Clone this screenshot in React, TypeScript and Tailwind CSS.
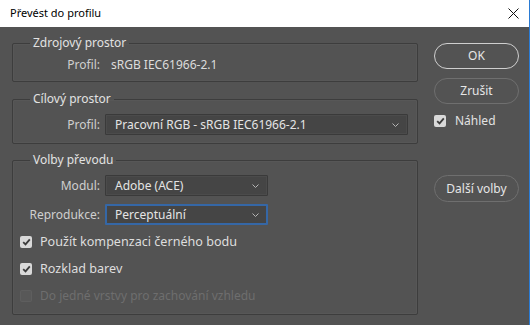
import type { ReactNode } from 'react'

const font = { fontFamily: '"Noto Sans", "Open Sans", Arial, sans-serif' }

function Chevron() {
  return (
    <svg width="7" height="4" viewBox="0 0 7 4" className="shrink-0">
      <path d="M0.5 0.5 L3.5 3.5 L6.5 0.5" fill="none" stroke="#b5b5b5" strokeWidth="1" />
    </svg>
  )
}

function Select({ value, width, focused = false }: { value: string; width: string; focused?: boolean }) {
  return (
    <div
      className={`flex h-[21px] ${width} items-center justify-between rounded-[1px] bg-[#454545] ${
        focused
          ? 'border-2 border-[#3567a6] pl-[8px] pr-[7px]'
          : 'border border-[#3a3a3a] pl-[9px] pr-[8px] shadow-[inset_0_0_0_1px_#4b4b4b]'
      }`}
    >
      <span className="text-[12px] leading-none text-[#e4e4e4]">{value}</span>
      <Chevron />
    </div>
  )
}

function CheckBox({ disabled = false, checked = true }: { disabled?: boolean; checked?: boolean }) {
  return (
    <span
      className={`flex h-[12px] w-[12px] shrink-0 items-center justify-center rounded-[2px] ${
        disabled ? 'bg-[#585858] shadow-[inset_0_0_0_1px_#5e5e5e]' : 'bg-[#d9d9d9]'
      }`}
    >
      {checked && !disabled ? (
        <svg width="9" height="8" viewBox="0 0 9 8">
          <path d="M1.2 4.2 L3.5 6.4 L7.8 1.4" fill="none" stroke="#3c3c3c" strokeWidth="1.8" />
        </svg>
      ) : null}
    </span>
  )
}

function Check({ checked = true, disabled = false, label }: { checked?: boolean; disabled?: boolean; label: string }) {
  return (
    <div className="flex h-[16px] items-center gap-[8px]">
      <CheckBox checked={checked} disabled={disabled} />
      <span className={`leading-none ${disabled ? 'text-[12px] text-[#6e6e6e]' : 'text-[12.6px] text-[#dedede]'}`}>{label}</span>
    </div>
  )
}

function Group({ title, children, className = '' }: { title: string; children: ReactNode; className?: string }) {
  return (
    <fieldset className={`m-0 min-w-0 rounded-[2px] border border-[#3d3d3d] p-0 shadow-[inset_0_0_0_1px_#575757] ${className}`}>
      <legend className="ml-[17px] px-[3px] text-[12px] leading-[14px] text-[#e2e2e2]">{title}</legend>
      {children}
    </fieldset>
  )
}

function Label({ text }: { text: string }) {
  return <span className="w-[87px] text-right text-[12px] leading-none text-[#cfcfcf]">{text}</span>
}

function Button({ label, primary = false, className = '' }: { label: string; primary?: boolean; className?: string }) {
  return (
    <div
      className={`flex h-[26px] w-[85px] items-center justify-center rounded-full border-[1.5px] text-[12px] text-[#e6e6e6] ${
        primary ? 'border-[#cfcfcf]' : 'border-[#6f6f6f]'
      } ${className}`}
    >
      {label}
    </div>
  )
}

export default function App() {
  return (
    <div className="flex h-[325px] w-[530px] flex-col overflow-hidden border-r border-[#2a7bd4] bg-[#535353]" style={font}>
      <div className="flex h-[27px] shrink-0 items-center justify-between bg-white pl-[10px] pr-[10px]">
        <span className="text-[11px] text-black">Převést do profilu</span>
        <svg width="11" height="11" viewBox="0 0 11 11">
          <path d="M0.5 0.5 L10.5 10.5 M10.5 0.5 L0.5 10.5" stroke="#111" strokeWidth="1" />
        </svg>
      </div>

      <div className="flex gap-[16px] pl-[12px] pt-[9px]">
        <div className="flex w-[406px] flex-col">
          <Group title="Zdrojový prostor">
            <div className="mb-[8px] mt-[7px] flex h-[16px] items-center">
              <Label text="Profil:" />
              <span className="ml-[11px] text-[12px] leading-none text-[#dcdcdc]">sRGB IEC61966-2.1</span>
            </div>
          </Group>

          <Group title="Cílový prostor" className="mt-[10px]">
            <div className="mb-[8px] mt-[8px] flex items-center">
              <Label text="Profil:" />
              <div className="ml-[5px]">
                <Select value="Pracovní RGB - sRGB IEC61966-2.1" width="w-[303px]" />
              </div>
            </div>
          </Group>

          <Group title="Volby převodu" className="mt-[9px]">
            <div className="mb-[10px] mt-[8px] flex flex-col">
              <div className="flex items-center">
                <Label text="Modul:" />
                <div className="ml-[5px]">
                  <Select value="Adobe (ACE)" width="w-[163px]" />
                </div>
              </div>
              <div className="mt-[8px] flex items-center">
                <Label text="Reprodukce:" />
                <div className="ml-[5px]">
                  <Select value="Perceptuální" width="w-[163px]" focused />
                </div>
              </div>
              <div className="ml-[7px] mt-[9px] flex flex-col gap-[11px]">
                <Check label="Použít kompenzaci černého bodu" />
                <Check label="Rozklad barev" />
                <Check label="Do jedné vrstvy pro zachování vzhledu" checked={false} disabled />
              </div>
            </div>
          </Group>
        </div>

        <div className="flex w-[85px] flex-col pt-[7px]">
          <Button label="OK" primary />
          <Button label="Zrušit" className="mt-[9px]" />
          <div className="mt-[9px] flex h-[16px] items-center gap-[9px]">
            <CheckBox />
            <span className="text-[12px] leading-none text-[#e2e2e2]">Náhled</span>
          </div>
          <Button label="Další volby" className="mt-[46px] h-[27px]" />
        </div>
      </div>
    </div>
  )
}
